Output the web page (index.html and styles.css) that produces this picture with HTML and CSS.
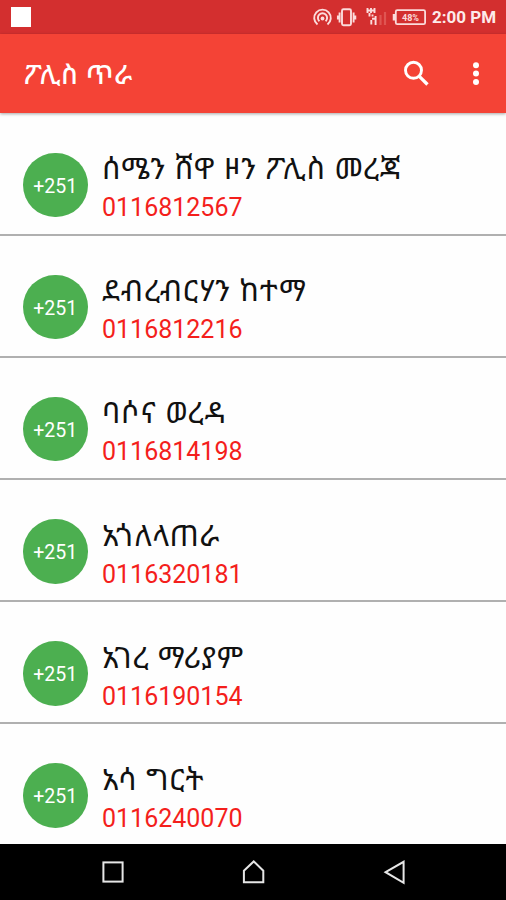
FILE: index.html
```html
<!DOCTYPE html>
<html lang="am">
<head>
    <meta charset="UTF-8">
    <meta name="viewport" content="width=device-width, initial-scale=1.0">
    <title>ፖሊስ ጥራ</title>
    <link rel="stylesheet" href="styles.css">
</head>
<body>

    <div class="statusbar">
        <span class="notification"></span>
        <div class="status-icons">
            <svg class="status-svg" width="126" height="34" viewBox="0 0 126 34">
                <!-- hotspot -->
                <g fill="none" stroke="#fbdcdc" stroke-width="1.9">
                    <path d="M17.5 24.5a8.3 8.3 0 1 1 10 0"/>
                    <path d="M19.4 21.3a4.6 4.6 0 1 1 6.2 0"/>
                </g>
                <circle cx="22.5" cy="18.5" r="1.9" fill="#fbdcdc"/>
                <!-- vibrate -->
                <g fill="none" stroke="#fbdcdc" stroke-width="1.9">
                    <rect x="42" y="9.3" width="9" height="16" rx="1.5"/>
                    <path d="M39.6 12.5v10M53.6 12.5v10M37.9 15.5v4M55.3 15.5v4"/>
                </g>
                <!-- signal -->
                <g fill="none" stroke="#fbdcdc" stroke-width="1.9">
                    <path d="M67.5 8v5M71 8v5M74.5 8v5M66.5 10.5h9M69.5 13v3.5M72.5 14.5v2"/>
                    <path d="M71.3 20v4.5M75.6 16v9M72 18.8h3"/>
                </g>
                <path d="M80.5 15v10M85 12v13" stroke="#df5552" stroke-width="2.2"/>
                <!-- battery -->
                <rect x="95.8" y="10.2" width="29.3" height="14" rx="1.5" fill="none" stroke="#fbdcdc" stroke-width="1.8"/>
                <path d="M94 14v6.5" stroke="#fbdcdc" stroke-width="2.5"/>
                <text class="battery-text" x="110.5" y="20.7" text-anchor="middle">48%</text>
            </svg>
            <span class="clock">2:00 PM</span>
        </div>
    </div>

    <div class="toolbar">
        <h1>ፖሊስ ጥራ</h1>
        <svg class="search" width="28" height="28" viewBox="0 0 28 28">
            <circle cx="10.5" cy="10.3" r="8" fill="none" stroke="#fff" stroke-width="2.9"/>
            <path d="M16.3 16.3l8.2 8.2" stroke="#fff" stroke-width="3.3"/>
        </svg>
        <svg class="more" width="8" height="24" viewBox="0 0 8 24">
            <circle cx="4" cy="3.2" r="3" fill="#fff"/>
            <circle cx="4" cy="11.6" r="3" fill="#fff"/>
            <circle cx="4" cy="20" r="3" fill="#fff"/>
        </svg>
    </div>

    <div class="list">
        <div class="row">
            <div class="code">+251</div>
            <div class="contact">
                <div class="name">ሰሜን ሸዋ ዞን ፖሊስ መረጃ</div>
                <div class="phone">0116812567</div>
            </div>
        </div>
        <div class="row">
            <div class="code">+251</div>
            <div class="contact">
                <div class="name">ደብረብርሃን ከተማ</div>
                <div class="phone">0116812216</div>
            </div>
        </div>
        <div class="row">
            <div class="code">+251</div>
            <div class="contact">
                <div class="name">ባሶና ወረዳ</div>
                <div class="phone">0116814198</div>
            </div>
        </div>
        <div class="row">
            <div class="code">+251</div>
            <div class="contact">
                <div class="name">አጎለላጠራ</div>
                <div class="phone">0116320181</div>
            </div>
        </div>
        <div class="row">
            <div class="code">+251</div>
            <div class="contact">
                <div class="name">አገረ ማሪያም</div>
                <div class="phone">0116190154</div>
            </div>
        </div>
        <div class="row">
            <div class="code">+251</div>
            <div class="contact">
                <div class="name">አሳ ግርት</div>
                <div class="phone">0116240070</div>
            </div>
        </div>
    </div>

    <div class="navbar">
        <svg width="28" height="28" viewBox="0 0 28 28">
            <rect x="4.4" y="4.4" width="19.2" height="19.2"/>
        </svg>
        <svg width="28" height="28" viewBox="0 0 28 28">
            <path d="M3.9 12.7L13.7 3.4l9.6 9.3v11.5H3.9z"/>
        </svg>
        <svg width="28" height="28" viewBox="0 0 28 28">
            <path d="M4.6 14.2L22.6 3.8v21z"/>
        </svg>
    </div>

</body>
</html>
```
FILE: styles.css
```css
* {
    box-sizing: border-box;
}
body {
    margin: 0;
    height: 900px;
    display: flex;
    flex-direction: column;
    overflow: hidden;
    background: #fefefe;
    font-family: Roboto, "Noto Sans Ethiopic", "Abyssinica SIL", "Noto Sans", sans-serif;
}
.statusbar {
    flex: none;
    height: 34px;
    display: flex;
    align-items: center;
    justify-content: space-between;
    padding: 0 11px;
    background: #d32f2f;
}
.notification {
    width: 20px;
    height: 20px;
    background: white;
}
.status-icons {
    display: flex;
    align-items: center;
}
.status-svg {
    margin-right: 6px;
}
.battery-text {
    font-size: 9px;
    font-weight: bold;
    fill: #fbdcdc;
}
.clock {
    width: 63px;
    font-size: 17px;
    font-weight: bold;
    line-height: 20px;
    white-space: nowrap;
    color: #fdeaea;
}
.toolbar {
    flex: none;
    height: 79px;
    display: flex;
    align-items: center;
    padding: 0 26px 0 24px;
    background: #f44336;
    box-shadow: 0 1px 3px rgba(0, 0, 0, 0.35);
    z-index: 1;
}
h1 {
    flex: 1;
    margin: 0;
    padding-top: 2px;
    font-size: 27px;
    font-weight: 500;
    letter-spacing: 0.6px;
    line-height: 32px;
    color: white;
}
.search {
    margin-right: 41px;
}
.list {
    flex: 1;
    min-height: 0;
    padding-top: 0.5px;
    overflow: hidden;
}
.row {
    height: 122.2px;
    display: flex;
    padding: 39px 0 0 23px;
    border-bottom: 2px solid #b0b0b0;
}
.code {
    width: 64.5px;
    height: 64.5px;
    border-radius: 50%;
    background: #4caf50;
    color: white;
    font-size: 19.5px;
    line-height: 67.5px;
    text-align: center;
}
.contact {
    margin-left: 14.5px;
    margin-top: -3.5px;
}
.name {
    height: 41px;
    font-size: 30px;
    letter-spacing: 0.8px;
    word-spacing: 0.5px;
    line-height: 40px;
    white-space: nowrap;
    color: #111;
}
.phone {
    font-size: 25px;
    line-height: 36px;
    color: #f41f1c;
}
.navbar {
    flex: none;
    height: 56px;
    display: flex;
    align-items: center;
    justify-content: space-between;
    padding: 0 97px 0 99px;
    background: black;
}
.navbar svg {
    fill: none;
    stroke: #e6e6e6;
    stroke-width: 2;
}
```
